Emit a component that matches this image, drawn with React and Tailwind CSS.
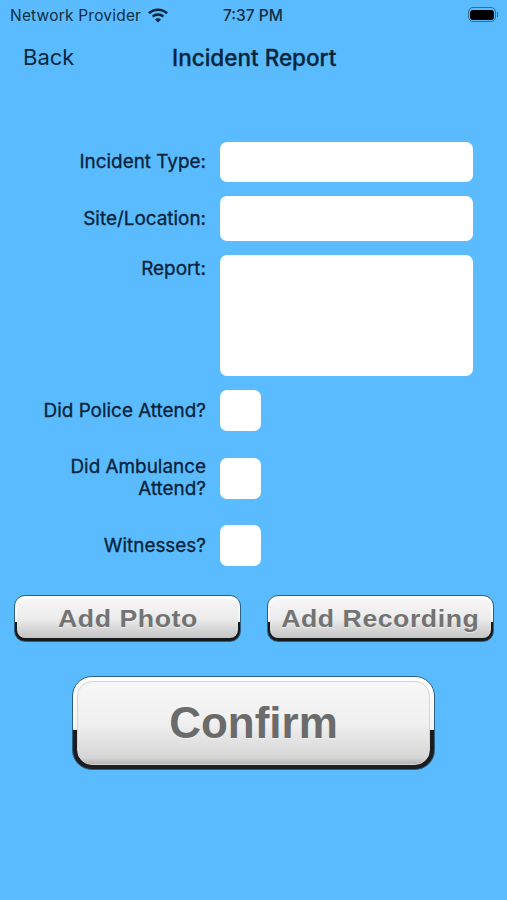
function Wifi() {
  return (
    <svg width="20" height="15" viewBox="0 0 20 15" className="block text-[#08263c]">
      <path d="M1 5.2C5.9 .6 14.1 .6 19 5.2" fill="none" stroke="currentColor" strokeWidth="2.6" />
      <path d="M4.6 8.6C7.6 5.9 12.4 5.9 15.4 8.6" fill="none" stroke="currentColor" strokeWidth="2.5" />
      <path d="M7 11.4 10 14.4 13 11.4C11.3 9.8 8.7 9.8 7 11.4Z" fill="currentColor" />
    </svg>
  );
}

function Label({ children, className = "" }) {
  return (
    <div className={`w-[206px] shrink-0 text-right text-[18.9px] leading-[22px] text-[#062238] [-webkit-text-stroke:0.3px_#062238] ${className}`}>
      {children}
    </div>
  );
}

function Check() {
  return <div className="ml-[14px] h-[41px] w-[41px] rounded-[7px] bg-white" />;
}

function SmallButton({ children, className = "" }) {
  return (
    <div className={`h-[47px] w-[227px] rounded-[11px] border border-[#2f5f80] bg-[linear-gradient(to_bottom,#ffffff_0%,#f4f4f4_57%,#15191c_58%,#15191c_100%)] px-[2px] pt-[3px] pb-[3px] ${className}`}>
      <div className="flex h-full w-full items-center justify-center overflow-hidden rounded-[8px] bg-[linear-gradient(to_bottom,#f6f6f6_0%,#ececec_50%,#c4c4c4_100%)]">
        <span className="scale-x-[1.11] whitespace-nowrap font-['Liberation_Sans',sans-serif] text-[24px] font-bold tracking-[0.5px] text-[#737373] [text-shadow:0_1px_0_#ffffff80]">
          {children}
        </span>
      </div>
    </div>
  );
}

export default function App() {
  return (
    <div className="flex h-[900px] w-[507px] flex-col overflow-hidden bg-[#5abcfe] font-['Inter',sans-serif]">
      <div className="relative flex h-[30px] items-center pl-[10px] pt-[1px] text-[15.5px] tracking-[0.2px] text-[#0d2c42]">
        <span>Network Provider</span>
        <span className="ml-[7px]"><Wifi /></span>
        <span className="absolute left-[223px] top-[7px] leading-[18px] font-medium tracking-normal">7:37 PM</span>
        <div className="absolute right-[9px] top-[7px] flex items-center">
          <div className="flex h-[15px] w-[28px] items-center justify-center rounded-[5px] border border-[#2f6f9a]">
            <div className="h-[10px] w-[24px] rounded-[3px] bg-black" />
          </div>
          <div className="ml-[1px] h-[5px] w-[1px] bg-[#2f6f9a]" />
        </div>
      </div>

      <div className="relative mt-[13px] flex h-[29px] items-center pl-[23px] text-[#07263c]">
        <span className="text-[22px] leading-[29px]">Back</span>
        <span className="absolute left-[172px] text-[22.5px] leading-[29px] font-medium [-webkit-text-stroke:0.3px_#07263c]">Incident Report</span>
      </div>

      <div className="mt-[70px] flex items-center">
        <Label>Incident Type:</Label>
        <div className="ml-[14px] h-[40px] w-[253px] rounded-[7px] bg-white" />
      </div>
      <div className="mt-[14px] flex items-center">
        <Label>Site/Location:</Label>
        <div className="ml-[14px] h-[45px] w-[253px] rounded-[7px] bg-white" />
      </div>
      <div className="mt-[14px] flex items-start">
        <Label className="pt-[3px]">Report:</Label>
        <div className="ml-[14px] h-[121px] w-[253px] rounded-[7px] bg-white" />
      </div>
      <div className="mt-[14px] flex items-center">
        <Label>Did Police Attend?</Label>
        <Check />
      </div>
      <div className="mt-[25px] flex items-center">
        <Label>Did Ambulance<br />Attend?</Label>
        <Check />
      </div>
      <div className="mt-[25px] flex items-center">
        <Label>Witnesses?</Label>
        <Check />
      </div>

      <div className="mt-[29px] flex pl-[14px]">
        <SmallButton>Add Photo</SmallButton>
        <SmallButton className="ml-[26px]">Add Recording</SmallButton>
      </div>

      <div className="mt-[34px] ml-[72px] h-[94px] w-[363px] rounded-[20px] border border-[#2f5f80] bg-[linear-gradient(to_bottom,#ffffff_0%,#f4f4f4_57%,#1a1e22_58%,#1a1e22_100%)] px-[4px] pt-[4px] pb-[4px]">
        <div className="flex h-full w-full items-center justify-center rounded-[15px] border border-[#d4d4d4] bg-[linear-gradient(to_bottom,#f7f7f7_0%,#f0f0f0_50%,#d6d6d6_92%,#b5b5b5_100%)] font-['Liberation_Sans',sans-serif] text-[44px] font-bold text-[#6b6b6b] [text-shadow:0_1px_0_#ffffff80]">
          Confirm
        </div>
      </div>
    </div>
  );
}
